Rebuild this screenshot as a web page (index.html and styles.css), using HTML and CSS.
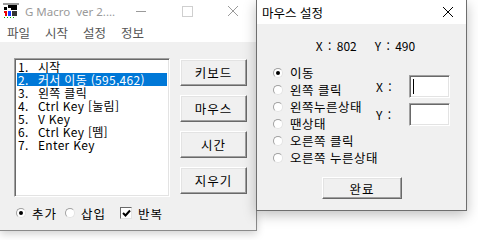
FILE: index.html
```html
<!DOCTYPE html>
<html lang="ko">
<head>
    <meta charset="UTF-8">
    <title>G Macro</title>
    <link rel="stylesheet" href="styles.css">
</head>
<body>
    <div class="win main">
        <div class="titlebar">
            <svg class="appicon" width="16" height="16" viewBox="0 0 16 16">
                <rect x="0" y="0" width="16" height="16" fill="#fff"/>
                <rect x="0" y="0" width="16" height="2" fill="#9a9a9a"/>
                <rect x="5" y="2" width="9" height="3" fill="#000"/>
                <rect x="1" y="4" width="3" height="3" fill="#000"/>
                <rect x="8" y="5" width="6" height="2" fill="#000"/>
                <rect x="1" y="8" width="3" height="2" fill="#e00"/>
                <rect x="2" y="10" width="2" height="3" fill="#e00"/>
                <rect x="5" y="8" width="3" height="5" fill="#1a3cff"/>
                <rect x="9" y="8" width="5" height="5" fill="#333"/>
                <rect x="1" y="14" width="1" height="1" fill="#0a0"/>
                <rect x="4" y="14" width="1" height="1" fill="#0a0"/>
                <rect x="7" y="14" width="1" height="1" fill="#0a0"/>
                <rect x="10" y="14" width="1" height="1" fill="#0a0"/>
            </svg>
            <span class="title dim">G Macro&nbsp; ver 2....</span>
            <div class="caption-btns">
                <span class="cbtn min"></span>
                <span class="cbtn max"></span>
                <span class="cbtn close">
                    <svg width="12" height="12" viewBox="0 0 12 12"><path d="M1 1L11 11M11 1L1 11" stroke="#9a9a9a" stroke-width="1"/></svg>
                </span>
            </div>
        </div>
        <div class="menubar">
            <span>파일</span><span>시작</span><span>설정</span><span>정보</span>
        </div>
        <div class="client">
            <div class="top-row">
                <div class="listbox">
                    <div class="item"><span class="num">1.</span>시작</div>
                    <div class="item selected"><span class="num">2.</span>커서 이동 (595,462)</div>
                    <div class="item"><span class="num">3.</span>왼쪽 클릭</div>
                    <div class="item"><span class="num">4.</span>Ctrl Key [눌림]</div>
                    <div class="item"><span class="num">5.</span>V Key</div>
                    <div class="item"><span class="num">6.</span>Ctrl Key [뗌]</div>
                    <div class="item"><span class="num">7.</span>Enter Key</div>
                </div>
                <div class="side-btns">
                    <button class="btn">키보드</button>
                    <button class="btn">마우스</button>
                    <button class="btn">시간</button>
                    <button class="btn">지우기</button>
                </div>
            </div>
            <div class="options">
                <span class="radio checked"></span><span class="lbl">추가</span>
                <span class="radio"></span><span class="lbl wide">삽입</span>
                <span class="check">
                    <svg width="9" height="9" viewBox="0 0 9 9"><path d="M1 4L3.5 6.5L8 1.5" fill="none" stroke="#000" stroke-width="2"/></svg>
                </span><span class="lbl">반복</span>
            </div>
        </div>
    </div>

    <div class="win dialog">
        <div class="titlebar dlg-title">
            <span class="title">마우스 설정</span>
            <span class="dlg-close">
                <svg width="12" height="12" viewBox="0 0 12 12"><path d="M1 1L11 11M11 1L1 11" stroke="#000" stroke-width="1"/></svg>
            </span>
        </div>
        <div class="dlg-client">
            <div class="coords"><span>X : 802</span><span>Y : 490</span></div>
            <div class="dlg-body">
                <div class="radio-list">
                    <div class="ropt"><span class="radio checked"></span>이동</div>
                    <div class="ropt"><span class="radio"></span>왼쪽 클릭</div>
                    <div class="ropt"><span class="radio"></span>왼쪽누른상태</div>
                    <div class="ropt"><span class="radio"></span>땐상태</div>
                    <div class="ropt"><span class="radio"></span>오른쪽 클릭</div>
                    <div class="ropt"><span class="radio"></span>오른쪽 누른상태</div>
                </div>
                <div class="fields">
                    <div class="field"><span class="flbl">X :</span><span class="edit focus"><i class="caret"></i></span></div>
                    <div class="field"><span class="flbl">Y :</span><span class="edit"></span></div>
                </div>
            </div>
            <div class="ok-row"><button class="btn ok">완료</button></div>
        </div>
    </div>
</body>
</html>
```

FILE: styles.css
```css
body {
    margin: 0;
    width: 478px;
    height: 240px;
    background: #fff;
    position: relative;
    overflow: hidden;
    font-family: "Noto Sans CJK KR", "Noto Sans", sans-serif;
    font-size: 12px;
    color: #000;
}
.win {
    background: #f0f0f0;
    box-sizing: border-box;
}
.main {
    width: 257px;
    height: 231px;
    border-right: 1px solid #8a8a8a;
    border-bottom: 1px solid #8a8a8a;
    box-shadow: 0 3px 8px rgba(0, 0, 0, 0.18);
}
.titlebar {
    height: 22px;
    background: #fff;
    display: flex;
    align-items: center;
}
.appicon { margin-left: 3px; flex-shrink: 0; }
.title {
    margin-left: 6px;
    font-family: "Noto Sans", sans-serif;
    font-size: 11.5px;
    white-space: nowrap;
}
.main .title {
    flex: 1;
    min-width: 0;
    overflow: hidden;
}
.dim { color: #9a9a9a; }
.caption-btns {
    margin-left: auto;
    display: flex;
    align-items: center;
    flex-shrink: 0;
}
.cbtn {
    width: 46px;
    height: 22px;
    display: flex;
    align-items: center;
    justify-content: center;
}
.cbtn.min::before {
    content: "";
    width: 10px;
    height: 1px;
    background: #9a9a9a;
}
.cbtn.max::before {
    content: "";
    width: 9px;
    height: 9px;
    border: 1px solid #cfcfcf;
}
.menubar {
    height: 20px;
    background: #fff;
    display: flex;
    align-items: center;
    padding-left: 7px;
    gap: 15px;
    color: #555;
    font-size: 12.5px;
}
.client { padding: 16px 0 0 14px; }
.top-row { display: flex; }
.listbox {
    width: 156px;
    height: 139px;
    box-sizing: border-box;
    background: #fff;
    border-top: 1px solid #a0a0a0;
    border-left: 1px solid #a0a0a0;
    border-right: 1px solid #fff;
    border-bottom: 1px solid #fff;
    box-shadow: inset 1px 1px 0 #696969, inset -1px -1px 0 #e3e3e3;
    padding: 1px 2px 0 2px;
}
.item {
    height: 13px;
    line-height: 13px;
    padding-left: 1px;
    white-space: nowrap;
    font-size: 12px;
    letter-spacing: 0.3px;
}
.item .num {
    display: inline-block;
    width: 20px;
}
.item.selected {
    background: #0078d7;
    color: #fff;
}
.side-btns {
    margin-left: 10px;
    padding-top: 1px;
    display: flex;
    flex-direction: column;
    gap: 9px;
}
.btn {
    width: 67px;
    height: 27px;
    padding: 0;
    background: #f0f0f0;
    font-family: "Noto Sans CJK KR", sans-serif;
    font-size: 12.5px;
    letter-spacing: 1px;
    color: #000;
    border: 1px solid;
    border-color: #fff #696969 #696969 #fff;
    box-shadow: inset -1px -1px 0 #a0a0a0, inset 1px 1px 0 #e3e3e3;
}
.options {
    display: flex;
    align-items: center;
    height: 16px;
    margin-top: 8px;
    padding-left: 2px;
    font-size: 12.5px;
}
.options .lbl { margin-left: 6px; margin-right: 8px; letter-spacing: 1px; }
.options .lbl.wide { margin-right: 14px; }
.radio {
    width: 10px;
    height: 10px;
    border-radius: 50%;
    box-sizing: border-box;
    border: 1px solid #a0a0a0;
    border-bottom-color: #e3e3e3;
    border-right-color: #e3e3e3;
    background: #fff;
    display: inline-flex;
    align-items: center;
    justify-content: center;
    flex-shrink: 0;
}
.radio.checked::before {
    content: "";
    width: 4px;
    height: 4px;
    border-radius: 50%;
    background: #000;
}
.check {
    width: 12px;
    height: 12px;
    box-sizing: border-box;
    border: 1px solid #696969;
    border-right-color: #e3e3e3;
    border-bottom-color: #e3e3e3;
    background: #fff;
    display: inline-flex;
    align-items: center;
    justify-content: center;
}

/* dialog window */
.dialog {
    position: absolute;
    left: 256px;
    top: 0;
    width: 211px;
    height: 211px;
    border-left: 1px solid #6e6e6e;
    border-right: 1px solid #6e6e6e;
    border-bottom: 1px solid #6e6e6e;
    box-shadow: 0 4px 12px rgba(0, 0, 0, 0.25);
}
.dlg-title { height: 24px; }
.dlg-title .title {
    margin-left: 5px;
    font-family: "Noto Sans CJK KR", sans-serif;
    font-size: 12.5px;
}
.dlg-close {
    margin-left: auto;
    margin-right: 12px;
    display: flex;
}
.coords {
    display: flex;
    justify-content: center;
    gap: 18px;
    margin-top: 13px;
    padding-left: 8px;
    font-size: 12px;
    word-spacing: 2px;
}
.dlg-body {
    display: flex;
    margin-top: 10px;
}
.radio-list {
    padding-left: 16px;
    display: flex;
    flex-direction: column;
}
.ropt {
    height: 17px;
    display: flex;
    align-items: center;
    font-size: 12.5px;
    letter-spacing: 0.5px;
}
.ropt .radio { margin-right: 7px; }
.fields {
    margin-left: -2px;
    padding-top: 11px;
    display: flex;
    flex-direction: column;
    gap: 5px;
}
.field {
    display: flex;
    align-items: center;
}
.flbl {
    width: 33px;
    font-size: 12px;
    word-spacing: 2px;
}
.edit {
    width: 41px;
    height: 23px;
    box-sizing: border-box;
    background: #fff;
    border: 1px solid #a0a0a0;
    border-right-color: #fff;
    border-bottom-color: #fff;
    box-shadow: inset 1px 1px 0 #696969, inset -1px -1px 0 #e3e3e3;
    position: relative;
}
.caret {
    position: absolute;
    left: 3px;
    top: 3px;
    width: 1px;
    height: 15px;
    background: #000;
}
.ok-row {
    display: flex;
    justify-content: center;
    margin-top: 11px;
    padding-left: 1px;
}
.btn.ok {
    width: 80px;
    height: 22px;
}
```
